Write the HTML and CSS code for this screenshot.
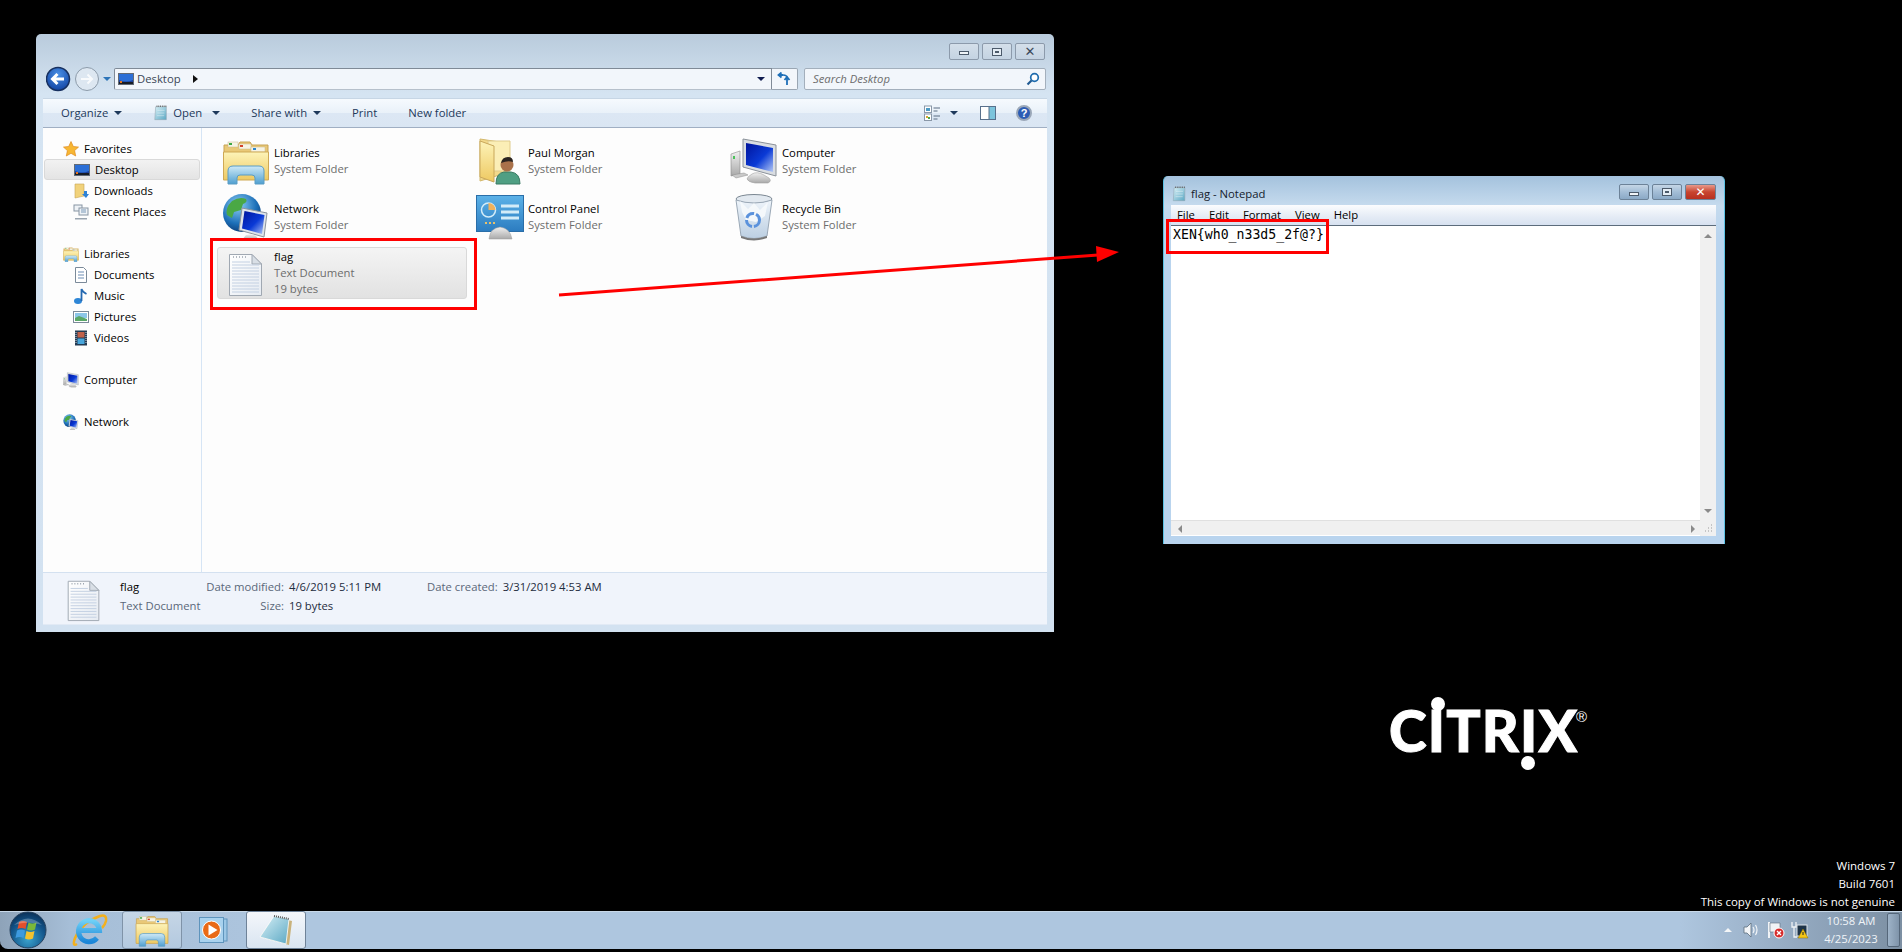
FILE: index.html
```html
<!DOCTYPE html>
<html>
  <head>
    <title>flag - Notepad</title>
    <link rel="stylesheet" href="styles.css">
  </head>

  <body>
    <!-- Shared icons -->
    <svg class="defs" aria-hidden="true">
      <defs>
        <linearGradient id="gFolder" x1="0" y1="0" x2="0" y2="1"><stop offset="0" stop-color="#fdf3b8"/><stop offset="1" stop-color="#eec962"/></linearGradient>
        <linearGradient id="gLib" x1="0" y1="0" x2="0" y2="1"><stop offset="0" stop-color="#cfeaf7"/><stop offset="1" stop-color="#4f9fd0"/></linearGradient>
        <linearGradient id="gDoc" x1="0" y1="0" x2="1" y2="1"><stop offset="0" stop-color="#fff"/><stop offset="1" stop-color="#e6ebf2"/></linearGradient>
        <linearGradient id="gScreen" x1="0" y1="0" x2="1" y2="1"><stop offset="0" stop-color="#00149c"/><stop offset=".55" stop-color="#0a3ad6"/><stop offset="1" stop-color="#b4c8f4"/></linearGradient>
        <linearGradient id="gMetal" x1="0" y1="0" x2="0" y2="1"><stop offset="0" stop-color="#f0f0f0"/><stop offset="1" stop-color="#a9a9a9"/></linearGradient>
        <radialGradient id="gGlobe" cx=".4" cy=".3" r=".8"><stop offset="0" stop-color="#8fd0f5"/><stop offset=".6" stop-color="#1c6fb8"/><stop offset="1" stop-color="#0a2f66"/></radialGradient>
        <radialGradient id="gOrb" cx=".5" cy=".75" r=".8"><stop offset="0" stop-color="#3ba4cf"/><stop offset=".6" stop-color="#12548a"/><stop offset="1" stop-color="#0a2a4e"/></radialGradient>
        <radialGradient id="gBack" cx=".5" cy=".3" r=".8"><stop offset="0" stop-color="#4a90e6"/><stop offset="1" stop-color="#0b3a9a"/></radialGradient>
        <linearGradient id="gPanel" x1="0" y1="0" x2="0" y2="1"><stop offset="0" stop-color="#5cb2e8"/><stop offset="1" stop-color="#2c7cc0"/></linearGradient>
        <linearGradient id="gBin" x1="0" y1="0" x2="0" y2="1"><stop offset="0" stop-color="#eef4fa"/><stop offset="1" stop-color="#bccfe2"/></linearGradient>
        <linearGradient id="gPad" x1="0" y1="0" x2="1" y2="1"><stop offset="0" stop-color="#d8f0f6"/><stop offset="1" stop-color="#5ba8c4"/></linearGradient>
        <linearGradient id="gIe" x1="0" y1="0" x2="0" y2="1"><stop offset="0" stop-color="#6fd0f6"/><stop offset="1" stop-color="#1b86d8"/></linearGradient>

        <symbol id="iLibrary" viewBox="0 0 48 48">
          <path d="M2 8h14l2-3h10l2 3h16v34H2z" fill="#e9c877" stroke="#c8a355"/>
          <rect x="6" y="5" width="10" height="5" fill="#f6f3e4" stroke="#c8b98a" stroke-width=".5"/>
          <rect x="7" y="6" width="3" height="2" fill="#3aa845"/>
          <rect x="17" y="7" width="12" height="5" fill="#f6f3e4" stroke="#c8b98a" stroke-width=".5"/>
          <rect x="18" y="8" width="3" height="2" fill="#d4432c"/>
          <rect x="29" y="10" width="14" height="5" fill="#f6f3e4" stroke="#c8b98a" stroke-width=".5"/>
          <rect x="31" y="11" width="3" height="2" fill="#2b86d0"/>
          <path d="M1.5 15h45v28h-45z" fill="url(#gFolder)" stroke="#cfa955"/>
          <path d="M6 47V34q0-5 5-5h26q5 0 5 5v13H33v-6q0-3-3-3H18q-3 0-3 3v6z" fill="url(#gLib)" stroke="#5a9cc4"/>
        </symbol>

        <symbol id="iDoc" viewBox="0 0 48 48">
          <path d="M7.500 5.500H30l9.500 9.500v31.500h-32z" fill="url(#gDoc)" stroke="#a0a8b2"/>
          <path d="M30 5.500v9.500h9.500z" fill="#d9dfe6" stroke="#a0a8b2"/>
          <path d="M10 13h18M10 16h27M10 19h27M10 22h27M10 25h27M10 28h27M10 31h27M10 34h27M10 37h27M10 40h27M10 43h27" stroke="#c3d0e2"/>
          <path d="M11 8h1m2 0h1m2 0h1m2 0h1m2 0h1" stroke="#9aa3ad" stroke-width="1.500"/>
        </symbol>

        <symbol id="iUserFolder" viewBox="0 0 48 48">
          <path d="M4 2l26 4v30L4 44z" fill="#f3d98a" stroke="#d3b86c"/>
          <path d="M12 4h22v30H12z" fill="#fbeeb6" stroke="#e0cb8c"/>
          <path d="M4 4l14 5v36L4 40z" fill="url(#gFolder)" stroke="#c9a75a"/>
          <path d="M20 47q0-11 8-12h7q9 1 9 12z" fill="#4f9f83" stroke="#397a63"/>
          <circle cx="31" cy="28" r="6.500" fill="#a9714a"/>
          <path d="M25 26q1-6 7-6 5 0 5 5-5-2-12 1z" fill="#2b2420"/>
        </symbol>

        <symbol id="iComputer" viewBox="0 0 48 48">
          <path d="M1 17l9-3v23l-9 2z" fill="url(#gMetal)" stroke="#8c8c8c" stroke-width=".6"/>
          <rect x="3" y="19" width="2" height="3" fill="#4bc25a"/>
          <path d="M13 2l33 6v31l-33-9z" fill="#d9dde2" stroke="#8a9199"/>
          <path d="M16 6l27 5v24l-27-7z" fill="url(#gScreen)"/>
          <path d="M22 37q5-3 12 1l5 3q3 3-1 5H25q-7-1-8-4 0-2 5-5z" fill="url(#gMetal)" stroke="#a2a2a2" stroke-width=".6"/>
          <path d="M2 38l12-2 4 2-12 3z" fill="#c9c9c9" stroke="#8c8c8c" stroke-width=".5"/>
        </symbol>

        <symbol id="iNetwork" viewBox="0 0 48 48">
          <circle cx="20" cy="20" r="19" fill="url(#gGlobe)"/>
          <path d="M10 8q8-5 14-2 2 3-3 5l-2 6-7 2-2 6-5-3q-2-7 5-14zM22 26l7 2 2 6-6 4-3-5z" fill="#4aa845"/>
          <path d="M20 15l25 5-3 24-25-7z" fill="#dfe4ea" stroke="#8b939c"/>
          <path d="M22.500 18l20 4-2.500 19-20-5.500z" fill="url(#gScreen)"/>
          <path d="M24 42q6-2 10 1l3 4H20z" fill="url(#gMetal)"/>
        </symbol>

        <symbol id="iPanel" viewBox="0 0 48 48">
          <rect x="0.500" y="2.500" width="47" height="36" fill="url(#gPanel)" stroke="#2a6ea8"/>
          <circle cx="12.500" cy="17" r="7" fill="none" stroke="#d4ecf8" stroke-width="1.500"/>
          <path d="M12.500 10a7 7 0 0 1 7 7h-7z" fill="#f0b25c"/>
          <path d="M25 13h18M25 19h18M25 25h18" stroke="#d4ecf8" stroke-width="3"/>
          <path d="M9 30h2m2 0h2m2 0h2" stroke="#e9c26c" stroke-width="2"/>
          <path d="M13 46q1-11 11-12 10 1 12 12z" fill="url(#gMetal)" stroke="#9a9a9a" stroke-width=".5"/>
        </symbol>

        <symbol id="iBin" viewBox="0 0 48 48">
          <ellipse cx="24" cy="6" rx="18" ry="4.500" fill="#e2e9f0" stroke="#7b8792"/>
          <path d="M6 7l5 36q13 5 26 0l5-36q-18 6-36 0z" fill="url(#gBin)" stroke="#9aa8b6"/>
          <path d="M10 8l8 8 6-6 6 7 8-8-3 14-9 6-10-2-4-8z" fill="#f6f9fc" opacity=".9"/>
          <path d="M11 43q13 5 26 0v2q-13 5-26 0z" fill="#777"/>
          <circle cx="23" cy="27" r="6.500" fill="none" stroke="#5b92dc" stroke-width="3" stroke-dasharray="9 2"/>
        </symbol>

        <symbol id="iPadDoc" viewBox="0 0 16 18">
          <path d="M2 2h12v14.500H1z" fill="url(#gPad)" stroke="#8fa3ae" stroke-width=".6"/>
          <path d="M3 1.500h11" stroke="#666" stroke-dasharray="1 1" stroke-width="1.600"/>
          <path d="M4 6h8M3.800 9h8M3.600 12h8" stroke="#fff" stroke-width=".6" opacity=".7"/>
        </symbol>

        <symbol id="iDesk" viewBox="0 0 16 16">
          <rect x="0.500" y="2.500" width="15" height="11" fill="#1b3f9a" stroke="#626a75"/>
          <path d="M1 3h14v6q-7 3-14 0z" fill="#2c6fd6"/>
          <rect x="1" y="11" width="14" height="2" fill="#171c26"/>
          <rect x="2" y="10" width="2" height="2" fill="#e2741e"/>
        </symbol>
      </defs>
    </svg>

    <div class="desktop">
      <!-- Explorer window -->
      <div class="window explorer">
        <div class="win-controls">
          <span class="win-btn"><i class="glyph-min"></i></span>
          <span class="win-btn"><i class="glyph-max"></i></span>
          <span class="win-btn glyph-close">&#10005;</span>
        </div>

        <div class="nav-row">
          <svg class="nav-btns" width="68" height="26" viewBox="0 0 68 26">
            <circle cx="41" cy="13" r="11.500" fill="#dde7f1" stroke="#8c9baa"/>
            <path d="M35 13h11m-4.500-4.500L46 13l-4.500 4.500" fill="none" stroke="#fff" stroke-width="2" opacity=".8"/>
            <circle cx="12" cy="13" r="11.500" fill="url(#gBack)" stroke="#17305f" stroke-width="1.500"/>
            <path d="M18 13H7m4.500-5L6.500 13l5 5" fill="none" stroke="#fff" stroke-width="3"/>
            <path d="M57 11h8l-4 4z" fill="#2c74b8"/>
          </svg>
          <div class="address">
            <svg class="icon16" width="16" height="16"><use href="#iDesk"/></svg>
            <span class="crumb">Desktop</span>
            <span class="crumb-arrow"></span>
            <span class="addr-drop"></span>
          </div>
          <div class="refresh">
            <svg width="16" height="14" viewBox="0 0 16 14">
              <path d="M6 3H2.500M4.500 .5L1.500 3l3 2.500" fill="none" stroke="#1e6fb8" stroke-width="1.800"/>
              <path d="M10 5v8M7.500 8L10 5l2.500 3" fill="none" stroke="#1e6fb8" stroke-width="1.800"/>
              <path d="M6 3q4 0 4 3" fill="none" stroke="#1e6fb8" stroke-width="1.500"/>
            </svg>
          </div>
          <div class="search">
            <span>Search Desktop</span>
            <svg width="14" height="14" viewBox="0 0 14 14">
              <circle cx="8.500" cy="5.500" r="3.800" fill="#fff" stroke="#1f6cae" stroke-width="1.700"/>
              <path d="M5.500 8.500L1.500 12.500" stroke="#1f5a92" stroke-width="2.200"/>
            </svg>
          </div>
        </div>

        <div class="toolbar">
          <span class="tool">Organize<i class="caret"></i></span>
          <span class="tool">
            <svg width="16" height="16"><use href="#iPadDoc"/></svg>
            Open<i class="caret caret-wide"></i>
          </span>
          <span class="tool">Share with<i class="caret"></i></span>
          <span class="tool">Print</span>
          <span class="tool">New folder</span>
          <div class="tool-right">
            <svg width="16" height="16" viewBox="0 0 16 16">
              <rect x=".5" y="1" width="7" height="6.500" fill="#fff" stroke="#8a98a8"/>
              <rect x="2" y="3" width="4" height="3" fill="#4d9bc4"/>
              <rect x=".5" y="9" width="7" height="6.500" fill="#fff" stroke="#8a98a8"/>
              <path d="M2 11h2v2H2z" fill="#d6a52f"/><path d="M4 12h2v2H4z" fill="#4aa845"/>
              <path d="M9.500 3H16M9.500 6h4M9.500 11H16M9.500 14h4" stroke="#5a6c82"/>
            </svg>
            <i class="caret caret-view"></i>
            <svg class="pane-icon" width="16" height="14" viewBox="0 0 16 14">
              <rect x=".5" y=".5" width="15" height="13" fill="#fff" stroke="#58708c"/>
              <rect x="9" y="1" width="6" height="12" fill="#7cc4dc"/>
              <path d="M9 1v12" stroke="#58708c"/>
            </svg>
            <span class="help">?</span>
          </div>
        </div>

        <div class="main">
          <nav class="sidebar">
            <div class="side-group">
              <div class="side-head">
                <svg width="16" height="16" viewBox="0 0 16 16"><path d="M8 .5l2.300 5 5.200.6-3.900 3.500 1.100 5.400L8 12.300 3.300 15l1.100-5.400L.5 6.100l5.200-.6z" fill="#f7b733" stroke="#e08a1e" stroke-width=".7"/></svg>
                Favorites
              </div>
              <div class="side-item selected"><svg width="16" height="16"><use href="#iDesk"/></svg>Desktop</div>
              <div class="side-item"><svg width="16" height="16" viewBox="0 0 16 16"><path d="M2 1h9v12l-9 2z" fill="#f1d27b" stroke="#c7a655" stroke-width=".6"/><path d="M11 8v3H9l4 4 3-4h-2V8z" fill="#2e82d6"/></svg>Downloads</div>
              <div class="side-item"><svg width="16" height="16" viewBox="0 0 16 16"><rect x="1" y="1" width="8" height="6" fill="#eef2f6" stroke="#8795a3"/><rect x="6" y="4" width="9" height="7" fill="#eef2f6" stroke="#8795a3"/><path d="M8 6h5M8 8h5" stroke="#7a99b8"/><path d="M2 14h12v1.500H2z" fill="#9aa5b0"/></svg>Recent Places</div>
            </div>

            <div class="side-group">
              <div class="side-head"><svg width="16" height="16"><use href="#iLibrary"/></svg>Libraries</div>
              <div class="side-item"><svg width="16" height="16" viewBox="0 0 16 16"><path d="M2.500 .5h8l3 3v12h-11z" fill="#fff" stroke="#7b8a99"/><path d="M5 5h6M5 8h6M5 11h6" stroke="#6c8db4"/></svg>Documents</div>
              <div class="side-item"><svg width="16" height="16" viewBox="0 0 16 16"><ellipse cx="5" cy="13" rx="4" ry="3" fill="#2e86d6"/><path d="M8.500 13V1q1 3 5 5" fill="none" stroke="#2468b0" stroke-width="1.800"/></svg>Music</div>
              <div class="side-item"><svg width="16" height="16" viewBox="0 0 16 16"><rect x=".5" y="2.500" width="15" height="11" fill="#fff" stroke="#7b8a99"/><path d="M2 4h12v5H2z" fill="#8cc6e8"/><path d="M2 12V9l4-2 8 3v2z" fill="#5aa868"/></svg>Pictures</div>
              <div class="side-item"><svg width="16" height="16" viewBox="0 0 16 16"><rect x="2" y=".5" width="12" height="15" fill="#233a52"/><path d="M4.500 2h7v5.500h-7z" fill="#c0614a"/><path d="M4.500 8.500h7V14h-7z" fill="#48a6dc"/><path d="M3 2v12m10-12v12" stroke="#cfd8e0" stroke-dasharray="1 1"/></svg>Videos</div>
            </div>

            <div class="side-group">
              <div class="side-head"><svg width="16" height="16"><use href="#iComputer"/></svg>Computer</div>
            </div>

            <div class="side-group">
              <div class="side-head"><svg width="16" height="16"><use href="#iNetwork"/></svg>Network</div>
            </div>
          </nav>

          <div class="tiles">
            <div class="tile"><svg width="48" height="48"><use href="#iLibrary"/></svg><div><p class="t-name">Libraries</p><p class="t-sub">System Folder</p></div></div>
            <div class="tile"><svg width="48" height="48"><use href="#iUserFolder"/></svg><div><p class="t-name">Paul Morgan</p><p class="t-sub">System Folder</p></div></div>
            <div class="tile"><svg width="48" height="48"><use href="#iComputer"/></svg><div><p class="t-name">Computer</p><p class="t-sub">System Folder</p></div></div>
            <div class="tile"><svg width="48" height="48"><use href="#iNetwork"/></svg><div><p class="t-name">Network</p><p class="t-sub">System Folder</p></div></div>
            <div class="tile"><svg width="48" height="48"><use href="#iPanel"/></svg><div><p class="t-name">Control Panel</p><p class="t-sub">System Folder</p></div></div>
            <div class="tile"><svg width="48" height="48"><use href="#iBin"/></svg><div><p class="t-name">Recycle Bin</p><p class="t-sub">System Folder</p></div></div>
            <div class="tile tile-selected"><svg width="48" height="48"><use href="#iDoc"/></svg><div><p class="t-name">flag</p><p class="t-sub">Text Document</p><p class="t-sub">19 bytes</p></div></div>
          </div>
        </div>

        <div class="details">
          <svg class="details-icon" width="46" height="46"><use href="#iDoc"/></svg>
          <div class="details-name">
            <p class="t-name">flag</p>
            <p class="d-label">Text Document</p>
          </div>
          <dl class="props props-a">
            <dt>Date modified:</dt><dd>4/6/2019 5:11 PM</dd>
            <dt>Size:</dt><dd>19 bytes</dd>
          </dl>
          <dl class="props props-b">
            <dt>Date created:</dt><dd>3/31/2019 4:53 AM</dd>
          </dl>
        </div>
      </div>

      <!-- Notepad window -->
      <div class="window notepad">
        <div class="np-title">
          <svg width="15" height="16"><use href="#iPadDoc"/></svg>
          <span class="np-caption">flag - Notepad</span>
          <div class="np-controls">
            <span class="np-btn"><i class="glyph-min"></i></span>
            <span class="np-btn"><i class="glyph-max"></i></span>
            <span class="np-btn np-close">&#10005;</span>
          </div>
        </div>
        <div class="np-menu">
          <span>File</span><span>Edit</span><span>Format</span><span>View</span><span>Help</span>
        </div>
        <div class="np-body">
          <div class="np-text">XEN{wh0_n33d5_2f@?}</div>
          <div class="np-vscroll"><i class="arrow-up"></i><i class="arrow-down"></i></div>
          <div class="np-hscroll"><i class="arrow-left"></i><i class="arrow-right"></i></div>
          <div class="np-grip">
            <svg width="12" height="12" viewBox="0 0 12 12"><path d="M9 3h1M6 6h1M9 6h1M3 9h1M6 9h1M9 9h1" stroke="#9a9a9a"/></svg>
          </div>
        </div>
      </div>

      <!-- Annotations drawn over the screenshot -->
      <div class="mark mark-file"></div>
      <div class="mark mark-text"></div>
      <svg class="arrow" width="1902" height="400" viewBox="0 0 1902 400">
        <path d="M559 295L1098 255" stroke="#f00" stroke-width="3"/>
        <path d="M1119 252L1096 246l1 16z" fill="#f00"/>
      </svg>

      <!-- Logo -->
      <div class="citrix">
        <span class="citrix-word">CITRIX</span>
        <i class="dot dot-a"></i>
        <i class="dot dot-b"></i>
        <span class="citrix-reg">&reg;</span>
      </div>

      <div class="watermark">
        <p>Windows 7</p>
        <p>Build 7601</p>
        <p>This copy of Windows is not genuine</p>
      </div>
    </div>

    <!-- Taskbar -->
    <div class="taskbar">
      <div class="start">
        <svg width="38" height="38" viewBox="0 0 38 38">
          <circle cx="19" cy="19" r="18" fill="url(#gOrb)" stroke="#26415e"/>
          <path d="M10 11q4-2 8 0l-1.500 7q-4-2-8 0z" fill="#e2502c"/>
          <path d="M19.500 11.500q4 2 8 0L26 18.500q-4 2-8 0z" fill="#7ab83a"/>
          <path d="M8 19.500q4-2 8 0L14.500 27q-4-2-8 0z" fill="#3d9ae0"/>
          <path d="M17.500 20q4 2 8 0L24 27.500q-4 2-8 0z" fill="#f4c22e"/>
          <path d="M5 14q14-13 28 0-14-5-28 0z" fill="#fff" opacity=".25"/>
        </svg>
      </div>
      <div class="task">
        <svg width="36" height="34" viewBox="0 0 36 34">
          <path d="M5 31Q0 34 3 25 10 9 28 3q7-2 6 5-1 4-4 7" fill="none" stroke="#f2b01e" stroke-width="2.500"/>
          <path d="M7.500 17.500h20A10.500 10.500 0 1 0 25 25" fill="none" stroke="url(#gIe)" stroke-width="5"/>
        </svg>
      </div>
      <div class="task task-open">
        <svg width="34" height="34"><use href="#iLibrary"/></svg>
      </div>
      <div class="task">
        <svg width="30" height="26" viewBox="0 0 30 26">
          <rect x="6" y="2" width="22" height="22" fill="#9cc7e6" stroke="#5e94bc"/>
          <rect x=".5" y=".5" width="24" height="25" fill="#a9d2ee" stroke="#5e94bc"/>
          <circle cx="12.500" cy="13" r="9" fill="#e96a17" stroke="#fff" stroke-width="1"/>
          <path d="M9.500 7.500l9 5.500-9 5.500z" fill="#fff"/>
        </svg>
      </div>
      <div class="task task-active">
        <svg width="34" height="32" viewBox="0 0 34 32">
          <path d="M15 3l18 4-3 24-29-8z" fill="#c9b27c"/>
          <path d="M15 2l15 3-3 25L1 23z" fill="url(#gPad)" stroke="#fff" stroke-width=".8"/>
          <path d="M15 2l15 3" stroke="#555" stroke-width="2" stroke-dasharray="1 1"/>
        </svg>
      </div>

      <div class="tray">
        <i class="tray-up"></i>
        <svg width="16" height="16" viewBox="0 0 16 16"><path d="M1 5h3l4-4v14l-4-4H1z" fill="#f2f5f8" stroke="#5c6c7c" stroke-width=".8"/><path d="M10 5q2 3 0 6M12.500 3q3 5 0 10" fill="none" stroke="#f2f5f8" stroke-width="1.200"/></svg>
        <svg width="18" height="18" viewBox="0 0 18 18"><path d="M2 1v16" stroke="#f0f3f6" stroke-width="2"/><path d="M3 2h10v9H3z" fill="#f0f3f6" stroke="#5c6c7c" stroke-width=".6"/><circle cx="12" cy="12" r="5" fill="#d62b2b" stroke="#fff"/><path d="M10 10l4 4m0-4l-4 4" stroke="#fff" stroke-width="1.300"/></svg>
        <svg class="tray-net" width="18" height="18" viewBox="0 0 18 18"><rect x="6" y="4" width="10" height="11" fill="#1d3348" stroke="#dfe6ec"/><path d="M1 1v5h4V1M3 6v10h3" fill="none" stroke="#eef2f6" stroke-width="1.300"/><path d="M12 8l5 9H7z" fill="#f4c516" stroke="#8a6d00" stroke-width=".5"/><path d="M12 11v3" stroke="#222"/></svg>
        <div class="clock"><p>10:58 AM</p><p>4/25/2023</p></div>
        <div class="show-desktop"></div>
      </div>
    </div>
  </body>
</html>
```

FILE: styles.css
```css
* {
  margin: 0;
  padding: 0;
  box-sizing: border-box;
}

body {
  width: 1902px;
  height: 952px;
  overflow: hidden;
  background: #000;
  font-family: 'Open Sans', 'Noto Sans', sans-serif;
  font-size: 11.3px;
  line-height: 16px;
  display: flex;
  flex-direction: column;
}

i {
  display: block;
}

.defs {
  position: absolute;
  width: 0;
  height: 0;
}

.desktop {
  position: relative;
  flex: 1;
}

.window {
  position: absolute;
}

/* Explorer */
.explorer {
  left: 36px;
  top: 34px;
  width: 1018px;
  height: 598px;
  padding: 9px 7px 7px 7px;
  display: flex;
  flex-direction: column;
  border-radius: 5px 5px 0 0;
  background: linear-gradient(#b9cbdc, #d5e4f2 60px, #d3e2f1);
}

.win-controls {
  display: flex;
  justify-content: flex-end;
  gap: 3px;
  height: 17px;
  padding-right: 2px;
}

.win-btn {
  width: 30px;
  height: 17px;
  display: flex;
  align-items: center;
  justify-content: center;
  border: 1px solid #8c9aab;
  border-radius: 2px;
  background: linear-gradient(#d4dfea, #c4d3e2);
  color: #3c4a5a;
}

.glyph-min {
  width: 10px;
  height: 4px;
  margin-top: 3px;
  border: 1px solid #4c5a6a;
  background: #f0f4f8;
}

.glyph-max {
  width: 10px;
  height: 8px;
  border: 1px solid #4c5a6a;
  box-shadow: inset 0 0 0 2px #e4ecf4, inset 0 0 0 3px #4c5a6a;
}

.glyph-close {
  font: bold 13px 'DejaVu Sans', sans-serif;
}

.nav-row {
  display: flex;
  height: 22px;
  margin-top: 8px;
  padding-left: 3px;
}

.nav-btns {
  flex: none;
  margin-top: -2px;
}

.address {
  flex: 1;
  display: flex;
  align-items: center;
  padding-left: 3px;
  color: #3a4656;
  background: #f2f6fb;
  border: 1px solid #7f8a97;
  border-bottom-color: #b6c0cb;
  border-radius: 2px 0 0 2px;
}

.crumb {
  margin-left: 3px;
}

.crumb-arrow {
  margin-left: 12px;
  border-left: 5px solid #111;
  border-top: 4px solid transparent;
  border-bottom: 4px solid transparent;
}

.addr-drop {
  margin-left: auto;
  margin-right: 6px;
  border-top: 4px solid #101c50;
  border-left: 4px solid transparent;
  border-right: 4px solid transparent;
}

.refresh {
  width: 26px;
  display: flex;
  align-items: center;
  justify-content: center;
  background: #f2f6fb;
  border: 1px solid #9aa6b3;
  border-left: 0;
  border-radius: 0 2px 2px 0;
}

.search {
  width: 242px;
  margin-left: 6px;
  margin-right: 1px;
  display: flex;
  align-items: center;
  justify-content: space-between;
  padding: 0 5px 0 8px;
  font-style: italic;
  color: #6d6d6d;
  background: #f2f6fb;
  border: 1px solid #a3afbc;
  border-radius: 2px;
}

.toolbar {
  display: flex;
  align-items: center;
  gap: 31px;
  height: 30px;
  margin-top: 8px;
  padding-left: 18px;
  color: #1e395b;
  background: linear-gradient(#f6fafe, #e9f1f9 50%, #dce7f4 51%, #dae6f3);
  border-top: 1px solid #c7d6e5;
  border-bottom: 1px solid #a0afc3;
}

.tool {
  display: flex;
  align-items: center;
  gap: 4px;
}

.caret {
  margin-left: 2px;
  border-top: 4px solid #1e395b;
  border-left: 4px solid transparent;
  border-right: 4px solid transparent;
}

.caret-wide {
  margin-left: 6px;
}

.tool-right {
  margin-left: auto;
  padding-right: 15px;
  display: flex;
  align-items: center;
}

.caret-view {
  margin-left: 10px;
}

.pane-icon {
  margin-left: 22px;
}

.help {
  width: 16px;
  height: 16px;
  margin-left: 20px;
  border-radius: 50%;
  background: #2c5cb4;
  border: 2px solid #9aa7b8;
  color: #fff;
  font: bold 11px/12px 'Liberation Sans', sans-serif;
  text-align: center;
}

.main {
  flex: 1;
  display: flex;
  min-height: 0;
  background: #fdfdfd;
}

.sidebar {
  width: 159px;
  padding-top: 10px;
  border-right: 1px solid #d6e5f5;
}

.side-group {
  margin-bottom: 21px;
}

.side-head,
.side-item {
  display: flex;
  align-items: center;
  gap: 5px;
  height: 21px;
  padding-left: 20px;
  color: #000;
}

.side-item {
  padding-left: 30px;
}

.side-item svg,
.side-head svg {
  flex: none;
}

.selected {
  margin: 0 1px;
  padding-left: 29px;
  border: 1px solid #d9d9d9;
  border-radius: 3px;
  background: linear-gradient(#f2f2f2, #e4e4e4);
}

.tiles {
  flex: 1;
  display: grid;
  grid-template-columns: repeat(3, 250px);
  grid-auto-rows: 52px;
  gap: 4px;
  padding: 7px 0 0 15px;
}

.tile {
  display: flex;
  align-items: center;
  gap: 4px;
  padding-left: 5px;
  border: 1px solid transparent;
  border-radius: 3px;
}

.tile svg {
  margin-left: -1px;
  flex: none;
}

.tile-selected {
  border-color: #d9d9d9;
  background: linear-gradient(#f4f4f4, #e2e2e2);
}

.t-name {
  color: #000;
}

.t-sub {
  color: #6d6d6d;
}

.details {
  height: 53px;
  display: flex;
  background: #f0f4fb;
  border-top: 1px solid #d4e1f0;
  box-shadow: inset 0 -1px 0 #e2eaf5;
}

.details-icon {
  margin: 3px 0 0 18px;
  flex: none;
}

.details-name {
  width: 84px;
  margin-left: 13px;
  padding-top: 6px;
}

.details-name p + p {
  margin-top: 3px;
}

.d-label,
.props dt {
  color: #5a6779;
}

.props {
  display: grid;
  align-content: start;
  row-gap: 3px;
  column-gap: 5px;
  padding-top: 6px;
}

.props dt {
  text-align: right;
}

.props dd {
  color: #1e2c40;
}

.props-a {
  grid-template-columns: 80px 132px;
}

.props-b {
  grid-template-columns: auto auto;
  margin-left: 6px;
  align-self: flex-start;
}

/* Notepad */
.notepad {
  left: 1163px;
  top: 176px;
  width: 562px;
  height: 368px;
  padding: 0 8px 8px 7px;
  display: flex;
  flex-direction: column;
  border-radius: 5px 5px 0 0;
  border-left: 1px solid #5cc2e4;
  border-right: 1px solid #5cc2e4;
  background: linear-gradient(#a4c2dd, #c6dbee 30px, #b9d4ee 60px);
}

.np-title {
  display: flex;
  align-items: center;
  height: 29px;
  flex: none;
  padding: 6px 0 0 1px;
  color: #14202c;
}

.np-caption {
  margin-left: 4px;
}

.np-controls {
  margin-left: auto;
  display: flex;
  gap: 3px;
  margin-top: -3px;
}

.np-btn {
  width: 30px;
  height: 16px;
  display: flex;
  align-items: center;
  justify-content: center;
  border: 1px solid #6c8298;
  border-radius: 2px;
  background: linear-gradient(#c5d6e6, #a3bdd6 50%, #8ba9c6);
}

.np-close {
  width: 31px;
  background: linear-gradient(#e8998a, #c8452f 50%, #b83020);
  color: #fff;
  font: bold 12px 'DejaVu Sans', sans-serif;
}

.np-menu {
  display: flex;
  gap: 14px;
  height: 20px;
  flex: none;
  padding: 2px 0 0 6px;
  color: #000;
  background: linear-gradient(#fbfcfe, #e4ebf5 60%, #d7e1f0);
}

.np-body {
  flex: 1;
  min-height: 0;
  display: grid;
  grid-template-columns: 1fr 16px;
  grid-template-rows: 1fr 16px;
  border-top: 1px solid #5c6c7c;
  background: #fff;
}

.np-text {
  padding: 1px 0 0 2px;
  font: 13.2px/16px 'DejaVu Sans Mono', monospace;
  color: #000;
}

.np-vscroll,
.np-hscroll {
  display: flex;
  justify-content: space-between;
  align-items: center;
  background: #f0f0f0;
}

.np-vscroll {
  flex-direction: column;
  padding: 8px 0 7px;
}

.np-hscroll {
  padding: 0 5px 0 7px;
  border-top: 1px solid #e0e0e0;
  box-shadow: inset 0 -1px 0 #fff;
}

.np-grip {
  padding: 2px;
  background: #f0f0f0;
}

.arrow-up {
  border-bottom: 4px solid #8a8a8a;
  border-left: 4px solid transparent;
  border-right: 4px solid transparent;
}

.arrow-down {
  border-top: 4px solid #8a8a8a;
  border-left: 4px solid transparent;
  border-right: 4px solid transparent;
}

.arrow-left {
  border-right: 4px solid #8a8a8a;
  border-top: 4px solid transparent;
  border-bottom: 4px solid transparent;
}

.arrow-right {
  border-left: 4px solid #8a8a8a;
  border-top: 4px solid transparent;
  border-bottom: 4px solid transparent;
}

/* Annotations */
.mark {
  position: absolute;
  border: 3px solid #f00;
}

.mark-file {
  left: 210px;
  top: 238px;
  width: 267px;
  height: 72px;
}

.mark-text {
  left: 1166px;
  top: 219px;
  width: 163px;
  height: 35px;
}

.arrow {
  position: absolute;
  left: 0;
  top: 0;
}

/* Citrix logo */
.citrix {
  position: absolute;
  left: 1389px;
  top: 695px;
  width: 210px;
  height: 80px;
  color: #fff;
}

.citrix-word {
  display: block;
  margin-top: 5px;
  font: 900 57px/60px 'Lato', 'Liberation Sans', sans-serif;
  letter-spacing: 1.2px;
  -webkit-text-stroke: 1px #fff;
}

.dot {
  position: absolute;
  width: 14px;
  height: 14px;
  border-radius: 50%;
  background: #fff;
}

.dot-a {
  left: 42px;
  top: 2px;
}

.dot-b {
  left: 132px;
  top: 61px;
}

.citrix-reg {
  position: absolute;
  left: 187px;
  top: 14px;
  font: 15px/16px 'Liberation Sans', sans-serif;
}

.watermark {
  position: absolute;
  right: 7px;
  bottom: 0;
  text-align: right;
  color: #fff;
  font-size: 11.5px;
  line-height: 18px;
}

/* Taskbar */
.taskbar {
  flex: none;
  height: 38px;
  margin-bottom: 3px;
  display: flex;
  align-items: center;
  gap: 2px;
  border-radius: 0 0 0 8px;
  background: linear-gradient(90deg, #8ea3b9, #a6bed7 70px, #aec6df 300px, #aec6df 1680px, #8a9fb5 1840px, #7c8fa2);
  box-shadow: inset 0 1px 0 #c8d8e8;
}

.start {
  width: 56px;
  padding-left: 9px;
  display: flex;
  margin-right: 2px;
}

.task {
  width: 60px;
  height: 38px;
  display: flex;
  align-items: center;
  justify-content: center;
  border: 1px solid transparent;
  border-radius: 3px;
}

.task-open {
  border-color: #7f93a8;
  background: linear-gradient(#c6d6e6, #b3c9df);
}

.task-active {
  border-color: #6e8298;
  background: linear-gradient(#f4f7fb, #d9e5f1);
}

.tray {
  margin-left: auto;
  display: flex;
  align-items: center;
  gap: 8px;
  height: 100%;
  padding-right: 2px;
}

.tray-up {
  margin-right: 3px;
  border-bottom: 4px solid #f4f6f8;
  border-left: 4px solid transparent;
  border-right: 4px solid transparent;
}

.tray-net {
  margin-left: -2px;
}

.clock {
  width: 64px;
  margin: 0 -4px 0 2px;
  text-align: center;
  color: #f0f4f8;
  line-height: 18px;
}

.show-desktop {
  width: 13px;
  height: 34px;
  border: 1px solid #55677a;
  border-radius: 2px;
  background: linear-gradient(90deg, #9eb3c8, #7f94aa);
}
```
